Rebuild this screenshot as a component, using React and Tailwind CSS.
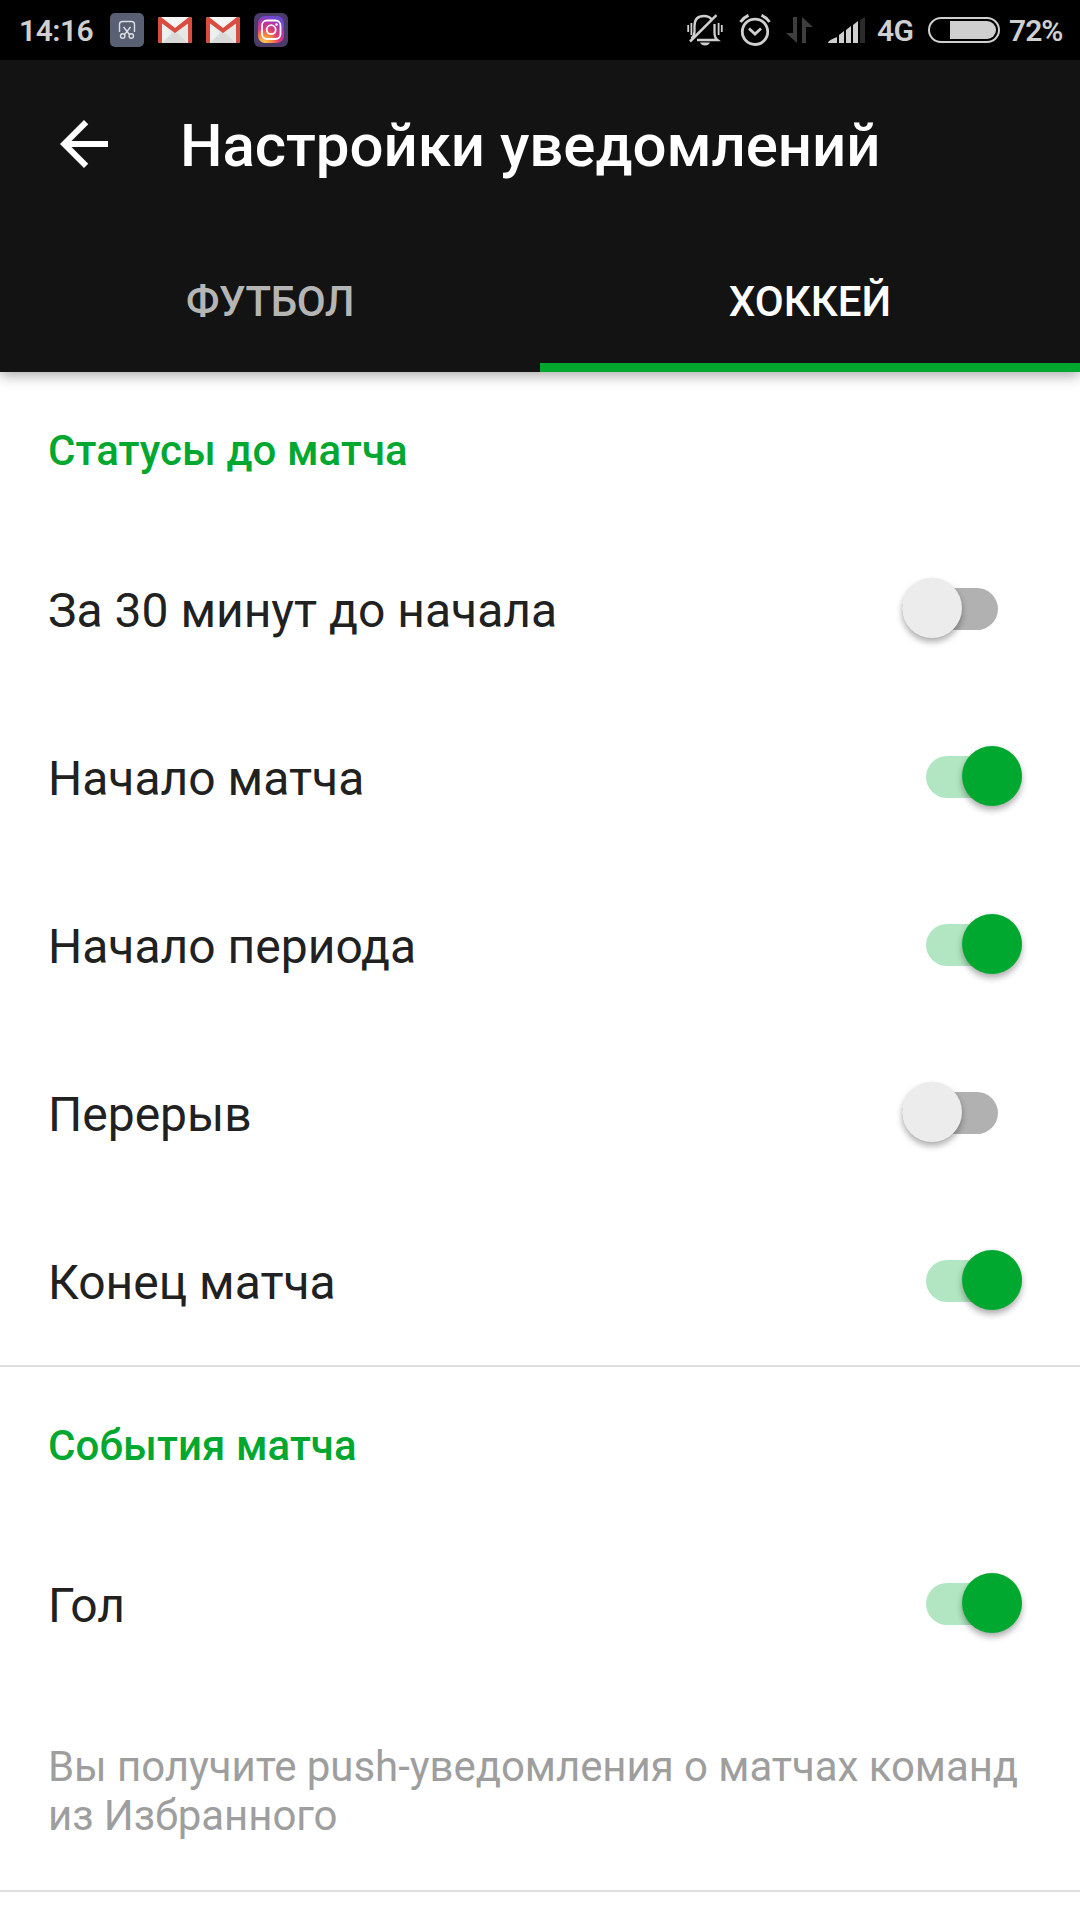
import { useState } from "react";

const statusesBefore = [
  { id: "before30", label: "За 30 минут до начала", on: false },
  { id: "start", label: "Начало матча", on: true },
  { id: "period", label: "Начало периода", on: true },
  { id: "break", label: "Перерыв", on: false },
  { id: "end", label: "Конец матча", on: true },
];

const matchEvents = [{ id: "goal", label: "Гол", on: true }];

function ScissorsBadge() {
  return (
    <svg width="34" height="34" viewBox="0 0 34 34" fill="none">
      <rect width="34" height="34" rx="5" fill="#596073" />
      <g stroke="#dcdee3" strokeWidth="1.4">
        <path d="M9.500 19V11.500a3 3 0 0 1 3-3h9a3 3 0 0 1 3 3V19" />
        <path d="M13.500 14l6 7.500M20.500 14l-6 7.500" />
        <circle cx="12.700" cy="23" r="2.200" />
        <circle cx="21.300" cy="23" r="2.200" />
      </g>
    </svg>
  );
}

function MailIcon() {
  return (
    <svg width="34" height="26" viewBox="0 0 34 26">
      <rect width="34" height="26" rx="2" fill="#e6e6e6" />
      <path d="M4 26L17 14l13 12z" fill="#d9d9d9" />
      <path d="M4 4v22l9-10z" fill="#efefef" />
      <path d="M3 0h28L17 11z" fill="#f5f5f5" />
      <path
        d="M0 2C0 .8.8 0 2 0h1l14 11L31 0h1c1.200 0 2 .8 2 2v22c0 1.200-.8 2-2 2h-2V6.500L17 16 4 6.500V26H2c-1.200 0-2-.8-2-2z"
        fill="#d94c40"
      />
    </svg>
  );
}

function InstagramBadge() {
  return (
    <svg width="34" height="34" viewBox="0 0 34 34" fill="none">
      <defs>
        <radialGradient id="insta" cx="0.25" cy="1" r="1">
          <stop offset="0" stopColor="#ffd35a" />
          <stop offset="0.3" stopColor="#f98a3c" />
          <stop offset="0.55" stopColor="#de3a78" />
          <stop offset="0.8" stopColor="#b234a8" />
          <stop offset="1" stopColor="#6b48d0" />
        </radialGradient>
      </defs>
      <rect width="34" height="34" rx="6" fill="#4a3b68" />
      <rect x="4" y="3" width="26" height="27" rx="7" fill="url(#insta)" />
      <g stroke="#fff" strokeWidth="1.800">
        <rect x="8" y="7.500" width="18.500" height="18.500" rx="5" />
        <circle cx="17.200" cy="16.700" r="4.500" />
      </g>
      <circle cx="22.500" cy="11.500" r="1.300" fill="#fff" />
    </svg>
  );
}

function MutedBell() {
  return (
    <svg width="36" height="32" viewBox="0 0 36 32" fill="none" stroke="#cfcfcf" strokeWidth="2.300">
      <path d="M4.500 24.500c2-2 3-4 3-7V12C7.500 5.500 11 2 17 2c4 0 6.500 1.500 8 4" />
      <path d="M27.500 10v8.500c0 4 1 6 3 7.500H10" />
      <path d="M3 27.500L29.500 1.200" strokeWidth="2.500" />
      <path d="M1.200 11v7M4.400 9v12M31.600 9v12M34.800 11v7" strokeWidth="1.800" />
      <path d="M13 28.500h10c-1 2-2.500 3-5 3s-4-1-5-3z" fill="#cfcfcf" stroke="none" />
    </svg>
  );
}

function AlarmIcon() {
  return (
    <svg width="32" height="32" viewBox="0 0 32 32" fill="none" stroke="#cfcfcf">
      <circle cx="16" cy="17.800" r="12.700" strokeWidth="2.800" />
      <path d="M10 14.500l6 5.500 6-5.500" strokeWidth="2.800" />
      <path d="M1.500 8C3.500 5 6 2.800 9.500 1.300M30.500 8c-2-3-4.500-5.200-8-6.700" strokeWidth="3" />
    </svg>
  );
}

function DataArrows() {
  return (
    <svg width="28" height="26" viewBox="0 0 28 26" fill="#3e3e3e">
      <path d="M7 0h4v26L0 16h7z" />
      <path d="M20 26h-4V0l11 10h-7z" />
    </svg>
  );
}

function SignalBars() {
  return (
    <svg width="37" height="26" viewBox="0 0 37 26" fill="#cfcfcf">
      <path d="M0 26c0-2 4-4 9-6v6zM11 18l5-4v12h-5zM18 13l5-4v17h-5zM25 8l5-4v22h-5z" />
      <path d="M32 3l5-3v26h-5z" fill="#2b2b2b" />
    </svg>
  );
}

function Battery() {
  return (
    <svg width="72" height="26" viewBox="0 0 72 26" fill="none">
      <rect x="1" y="1" width="70" height="24" rx="12" stroke="#cfcfcf" strokeWidth="2" />
      <path d="M22 4h37a9 9 0 0 1 0 18H22z" fill="#cfcfcf" />
    </svg>
  );
}

function StatusBar() {
  return (
    <div className="flex h-[60px] items-center justify-between bg-black pr-[18px] pl-[19px] text-[30px] leading-none font-semibold text-[#cfcfcf]">
      <div className="flex items-center">
        <span className="w-[91px] pt-0.5 tracking-[-0.5px]">14:16</span>
        <div className="flex items-center gap-[14px]">
          <ScissorsBadge />
          <MailIcon />
          <MailIcon />
          <InstagramBadge />
        </div>
      </div>
      <div className="flex items-center">
        <MutedBell />
        <span className="ml-4"><AlarmIcon /></span>
        <span className="ml-[15px]"><DataArrows /></span>
        <span className="ml-[14px]"><SignalBars /></span>
        <span className="ml-3 w-[38px] pt-0.5 tracking-[-0.6px]">4G</span>
        <span className="ml-[13px]"><Battery /></span>
        <span className="ml-[9px] w-[53px] pt-0.5 tracking-[-1px]">72%</span>
      </div>
    </div>
  );
}

function Switch({ on, onClick }) {
  return (
    <button
      role="switch"
      aria-checked={on}
      onClick={onClick}
      className={
        on
          ? "flex h-[42px] w-24 items-center justify-end rounded-full bg-[#b2e5c1]"
          : "mr-6 flex h-[42px] w-24 items-center rounded-full bg-[#b1b1b1]"
      }
    >
      <span
        className={
          on
            ? "mb-0.5 size-[60px] shrink-0 rounded-full bg-[#00a830] shadow-[0_4px_6px_rgba(0,0,0,0.32)]"
            : "mb-0.5 size-[60px] shrink-0 rounded-full bg-[#ececec] shadow-[0_4px_6px_rgba(0,0,0,0.32)]"
        }
      />
    </button>
  );
}

function SettingsGroup({ title, items, children }) {
  const [values, setValues] = useState(items.map((item) => item.on));

  const toggle = (index) => {
    setValues((prev) => prev.map((v, i) => (i === index ? !v : v)));
  };

  return (
    <section className="border-b-2 border-[#dfdfdf]">
      <h2 className="flex h-[153px] items-center px-12 pt-1 text-[42px] font-medium tracking-[0.08px] text-[#00a830]">
        {title}
      </h2>
      {items.map((item, index) => (
        <div key={item.id} className="flex h-[168px] items-center justify-between pr-[58px] pl-12">
          <span className="pt-1 text-[48px] text-[#212121]">{item.label}</span>
          <Switch on={values[index]} onClick={() => toggle(index)} />
        </div>
      ))}
      {children}
    </section>
  );
}

export default function App() {
  const [tab, setTab] = useState("hockey");

  return (
    <div className="h-[1920px] w-[1080px] overflow-hidden bg-white font-[Roboto,sans-serif]">
      <StatusBar />
      <header className="relative bg-[#131313] shadow-[0_4px_12px_rgba(0,0,0,0.32)]">
        <div className="flex h-[168px] items-center pl-[60px]">
          <svg width="48" height="48" viewBox="0 0 16 16" fill="#fff">
            <path d="M16 7H3.830l5.590-5.590L8 0 0 8l8 8 1.410-1.410L3.830 9H16z" />
          </svg>
          <h1 className="ml-[72px] pt-1 text-[60px] font-medium tracking-[-0.05px] text-white">
            Настройки уведомлений
          </h1>
        </div>
        <div className="flex h-36 text-[42px] font-medium">
          <button
            onClick={() => setTab("football")}
            className={
              tab === "football"
                ? "flex-1 border-y-9 border-t-transparent border-b-[#00a830] pt-0.5 text-white"
                : "flex-1 border-y-9 border-transparent pt-0.5 tracking-[-0.4px] text-[#b5b5b5]"
            }
          >
            ФУТБОЛ
          </button>
          <button
            onClick={() => setTab("hockey")}
            className={
              tab === "hockey"
                ? "flex-1 border-y-9 border-t-transparent border-b-[#00a830] pt-0.5 text-white"
                : "flex-1 border-y-9 border-transparent pt-0.5 text-[#b5b5b5]"
            }
          >
            ХОККЕЙ
          </button>
        </div>
      </header>
      <main>
        <SettingsGroup title="Статусы до матча" items={statusesBefore} />
        <SettingsGroup title="События матча" items={matchEvents}>
          <p className="h-[202px] px-12 pt-[54px] text-[42px] leading-[49px] tracking-[-0.06px] text-[#9e9e9e]">
            Вы получите push-уведомления о матчах команд из Избранного
          </p>
        </SettingsGroup>
      </main>
    </div>
  );
}
